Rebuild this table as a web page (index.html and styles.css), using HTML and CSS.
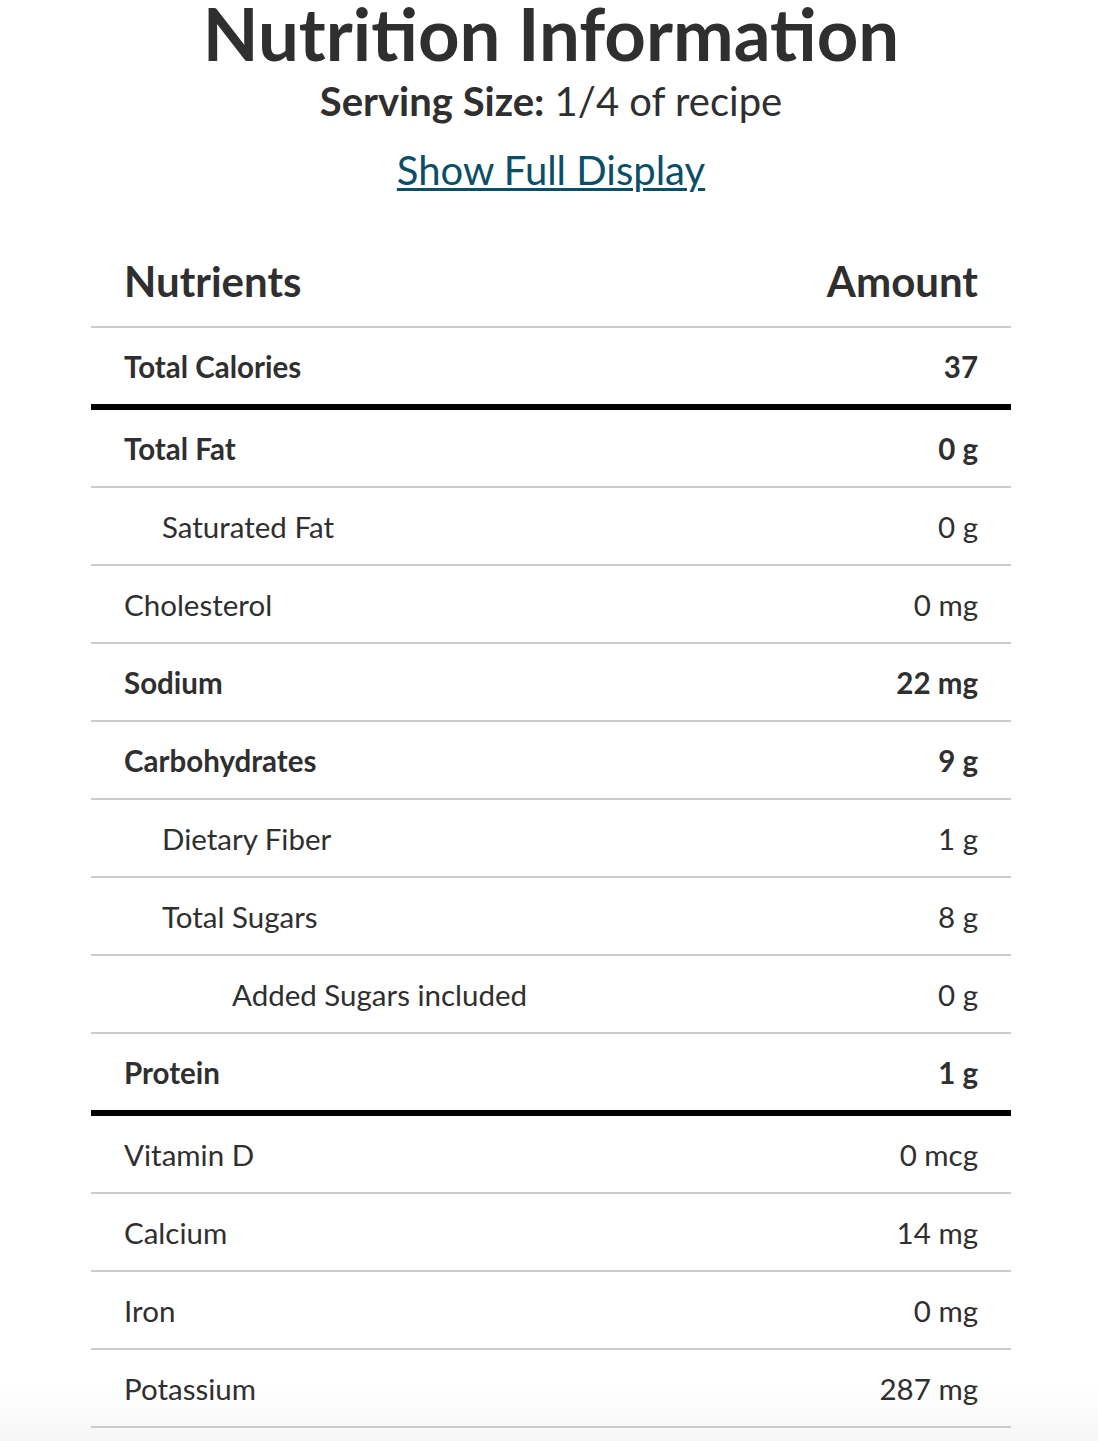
FILE: index.html
```html
<!DOCTYPE html>
<html lang="en">
<head>
<meta charset="utf-8">
<title>Nutrition Information</title>
<link rel="stylesheet" href="styles.css">
</head>
<body>
<main class="panel">
  <h1 class="title">Nutrition Information</h1>
  <p class="serving"><strong>Serving Size:</strong> 1/4 of recipe</p>
  <p class="toggle"><a href="#" class="toggle-link">Show Full Display</a></p>

  <div class="facts">
    <div class="row head">
      <span class="name">Nutrients</span>
      <span class="val">Amount</span>
    </div>
    <div class="row bold thick">
      <span class="name">Total Calories</span>
      <span class="val">37</span>
    </div>
    <div class="row bold">
      <span class="name">Total Fat</span>
      <span class="val">0 g</span>
    </div>
    <div class="row">
      <span class="name sub">Saturated Fat</span>
      <span class="val">0 g</span>
    </div>
    <div class="row">
      <span class="name">Cholesterol</span>
      <span class="val">0 mg</span>
    </div>
    <div class="row bold">
      <span class="name">Sodium</span>
      <span class="val">22 mg</span>
    </div>
    <div class="row bold">
      <span class="name">Carbohydrates</span>
      <span class="val">9 g</span>
    </div>
    <div class="row">
      <span class="name sub">Dietary Fiber</span>
      <span class="val">1 g</span>
    </div>
    <div class="row">
      <span class="name sub">Total Sugars</span>
      <span class="val">8 g</span>
    </div>
    <div class="row">
      <span class="name subsub">Added Sugars included</span>
      <span class="val">0 g</span>
    </div>
    <div class="row bold thick">
      <span class="name">Protein</span>
      <span class="val">1 g</span>
    </div>
    <div class="row">
      <span class="name">Vitamin D</span>
      <span class="val">0 mcg</span>
    </div>
    <div class="row">
      <span class="name">Calcium</span>
      <span class="val">14 mg</span>
    </div>
    <div class="row">
      <span class="name">Iron</span>
      <span class="val">0 mg</span>
    </div>
    <div class="row">
      <span class="name">Potassium</span>
      <span class="val">287 mg</span>
    </div>
  </div>
</main>
</body>
</html>
```

FILE: styles.css
```css
html {
  height: 1441px;
  background: linear-gradient(to bottom, #ffffff 0, #ffffff 1385px, #f6f6f6 1441px);
}

body {
  margin: 0;
  font-family: "Lato", "Liberation Sans", sans-serif;
  color: #2f2f2f;
  overflow: hidden;
}

.panel {
  width: 920px;
  margin: 0 0 0 91px;
  text-align: center;
}

.title {
  margin: 0;
  font-size: 72.5px;
  line-height: 66px;
  font-weight: 700;
}

.serving {
  margin: 11px 0 0;
  font-size: 40px;
  line-height: 48px;
}

.serving strong {
  font-weight: 700;
}

.toggle {
  margin: 21px 0 0;
  font-size: 40px;
  line-height: 48px;
}

.toggle-link {
  color: #0b4f66;
  text-decoration: underline;
  text-decoration-thickness: 3px;
  text-underline-offset: 3px;
}

.facts {
  margin-top: 42px;
  text-align: left;
}

.row {
  display: flex;
  justify-content: space-between;
  align-items: center;
  padding: 21px 33px 19px;
  font-size: 29.5px;
  line-height: 36px;
  border-bottom: 2px solid #cccccc;
}

.row.head {
  padding: 20px 33px;
  font-size: 42px;
  line-height: 50px;
  font-weight: 700;
}

.row.bold {
  font-weight: 700;
}

.row.thick {
  border-bottom: 6px solid #000000;
}

.name.sub {
  padding-left: 38px;
}

.name.subsub {
  padding-left: 108px;
}
```
